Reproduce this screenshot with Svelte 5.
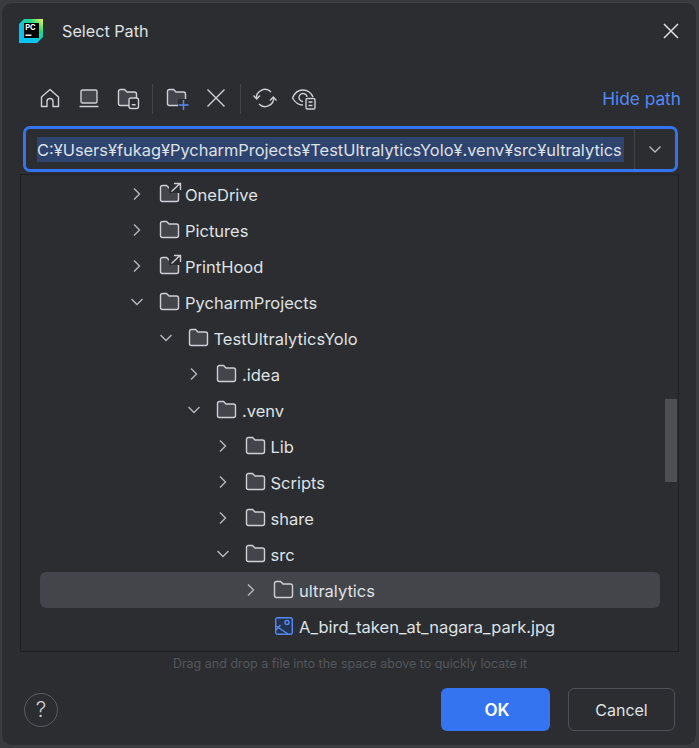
<script lang="ts">
	type Row = { name: string; depth: number; open?: boolean; leaf?: boolean; link?: boolean; selected?: boolean; image?: boolean };

	const rows: Row[] = [
		{ name: 'OneDrive', depth: 0, link: true },
		{ name: 'Pictures', depth: 0 },
		{ name: 'PrintHood', depth: 0, link: true },
		{ name: 'PycharmProjects', depth: 0, open: true },
		{ name: 'TestUltralyticsYolo', depth: 1, open: true },
		{ name: '.idea', depth: 2 },
		{ name: '.venv', depth: 2, open: true },
		{ name: 'Lib', depth: 3 },
		{ name: 'Scripts', depth: 3 },
		{ name: 'share', depth: 3 },
		{ name: 'src', depth: 3, open: true },
		{ name: 'ultralytics', depth: 4, selected: true },
		{ name: 'A_bird_taken_at_nagara_park.jpg', depth: 4, leaf: true, image: true }
	];

	let path = 'C:¥Users¥fukag¥PycharmProjects¥TestUltralyticsYolo¥.venv¥src¥ultralytics';
</script>

{#snippet folder()}
	<path d="M2.5 5.5 A2 2 0 0 1 4.5 3.5 H8.6 L11 6 H18.5 A2 2 0 0 1 20.5 8 V17.5 A2 2 0 0 1 18.5 19.5 H4.5 A2 2 0 0 1 2.5 17.5 Z" fill="#43454a" stroke="#ced0d6" stroke-width="1.4" stroke-linejoin="round" />
{/snippet}

<div class="dialog">
	<header class="titlebar">
		<svg class="logo" width="26" height="26" viewBox="0 0 26 26">
			<defs>
				<linearGradient id="pc" x1="0" y1="1" x2="1" y2="0">
					<stop offset="0.35" stop-color="#07c3f2" />
					<stop offset="0.7" stop-color="#21d789" />
					<stop offset="1" stop-color="#fcf84a" />
				</linearGradient>
			</defs>
			<path d="M6 1 H25 V19 L19 25 H1 V6 Z" fill="url(#pc)" />
			<rect x="6" y="5" width="15" height="15" fill="#000" />
			<text x="7.2" y="12" class="logo-text">PC</text>
			<rect x="7.5" y="16.5" width="6" height="1.4" fill="#fff" />
		</svg>
		<span class="title">Select Path</span>
		<svg class="close" width="18" height="18" viewBox="0 0 18 18">
			<path d="M2 2 L16 16 M16 2 L2 16" stroke="#dfe1e5" stroke-width="1.5" />
		</svg>
	</header>

	<div class="toolbar">
		<div class="tools">
			<svg class="tool" width="24" height="24" viewBox="0 0 24 24" fill="none" stroke="#ced0d6" stroke-width="1.4" stroke-linejoin="round">
				<path d="M3.5 11 L12 3.5 L20.5 11 V20.5 H15 V15.5 A3 3 0 0 0 9 15.5 V20.5 H3.5 Z" />
			</svg>
			<svg class="tool" width="24" height="24" viewBox="0 0 24 24" fill="none" stroke="#ced0d6" stroke-width="1.4">
				<rect x="4" y="4" width="16" height="13" rx="1.5" fill="#43454a" />
				<path d="M2.5 20.5 H21.5" />
			</svg>
			<svg class="tool" width="24" height="24" viewBox="0 0 24 24" fill="none">
				{@render folder()}
				<rect x="13" y="12" width="9.5" height="10.5" rx="2" fill="#2b2d30" stroke="#ced0d6" stroke-width="1.4" />
				<path d="M15.8 18.8 H19.6" stroke="#ced0d6" stroke-width="1.4" />
			</svg>
			<span class="sep first"></span>
			<svg class="tool" width="24" height="24" viewBox="0 0 24 24" fill="none">
				{@render folder()}
				<rect x="13" y="13" width="11" height="11" fill="#2b2d30" />
				<path d="M18.5 14 V24 M13.5 19 H23.5" stroke="#548af7" stroke-width="1.5" />
			</svg>
			<svg class="tool cross" width="24" height="24" viewBox="0 0 24 24" fill="none">
				<path d="M3.5 3.5 L20.5 20.5 M20.5 3.5 L3.5 20.5" stroke="#ced0d6" stroke-width="1.4" />
			</svg>
			<span class="sep second"></span>
			<svg class="tool refresh" width="24" height="24" viewBox="0 0 24 24" fill="none" stroke="#ced0d6" stroke-width="1.4">
				<path d="M3.5 13 A8.5 8.5 0 0 1 18 6" />
				<path d="M20.5 11 A8.5 8.5 0 0 1 6 18" />
				<path d="M0.5 9.5 L3.7 13 L7 9.5 M17 14.5 L20.3 11 L23.5 14.5" />
			</svg>
			<svg class="tool eye" width="26" height="24" viewBox="0 0 26 24" fill="none" stroke="#ced0d6" stroke-width="1.4">
				<path d="M12 19 C7 19 3.500 15.500 1.500 12 C3.500 7 7.500 4 12 4 C16.500 4 20.500 7 22 11" />
				<path d="M12 15.500 A4 4 0 1 1 16 11" />
				<rect x="15" y="12.500" width="9" height="10.500" rx="1.500" fill="#2b2d30" />
				<path d="M17.500 16 H21.500 M17.500 19.500 H21.500" />
			</svg>
		</div>
		<span class="hide">Hide path</span>
	</div>

	<div class="path">
		<span class="path-text"><span class="sel">{path}</span></span>
		<span class="drop">
			<svg width="14" height="14" viewBox="0 0 14 14" fill="none">
				<path d="M1.500 4.500 L7 10 L12.500 4.500" stroke="#b4b8bf" stroke-width="1.4" />
			</svg>
		</span>
	</div>

	<div class="tree">
		<div class="rows">
			{#each rows as row}
				<div class="row" class:selected={row.selected} style="padding-left: {109 + row.depth * 28.5}px">
					<span class="chev">
						{#if !row.leaf}
							<svg width="14" height="14" viewBox="0 0 14 14" fill="none">
								{#if row.open}
									<path d="M1.500 4 L7 9.500 L12.500 4" stroke="#b4b8bf" stroke-width="1.4" />
								{:else}
									<path d="M4 1.500 L9.500 7 L4 12.500" stroke="#b4b8bf" stroke-width="1.4" />
								{/if}
							</svg>
						{/if}
					</span>
					{#if row.image}
						<svg class="icon file" width="20" height="20" viewBox="0 0 20 20" fill="none" stroke="#548af7" stroke-width="1.4">
							<rect x="1.700" y="1.700" width="16.600" height="16.600" rx="2" fill="#25324d" />
							<circle cx="13" cy="6.500" r="2" />
							<path d="M2 10 L14 18 M2 14 L6.500 9" />
						</svg>
					{:else}
						<svg class="icon" width="24" height="24" viewBox="0 0 24 24" fill="none">
							{@render folder()}
							{#if row.link}
								<rect x="11" y="0" width="13" height="11" fill="#2b2d30" />
								<path d="M13.500 9.500 L22 1.500 M16 1.500 H22.500 V8" stroke="#ced0d6" stroke-width="1.400" />
							{/if}
						</svg>
					{/if}
					<span class="name">{row.name}</span>
				</div>
			{/each}
		</div>
		<div class="track"><div class="thumb"></div></div>
	</div>

	<p class="hint">Drag and drop a file into the space above to quickly locate it</p>

	<footer class="footer">
		<span class="help">?</span>
		<div class="buttons">
			<button class="btn ok">OK</button>
			<button class="btn cancel">Cancel</button>
		</div>
	</footer>
</div>

<style>
	:global(body) {
		background: #3a3b3e;
		font-family: Inter, "Noto Sans", sans-serif;
	}

	.dialog {
		box-sizing: border-box;
		width: 696px;
		height: 744px;
		margin: 2px 0 0 1px;
		background: #2b2d30;
		border: 1px solid #3c3e42;
		border-radius: 11px;
		color: #dfe1e5;
		overflow: hidden;
	}

	.titlebar {
		display: flex;
		align-items: center;
		height: 56px;
		padding: 0 16px 0 16px;
		box-sizing: border-box;
	}
	.logo { margin-right: 18px; }
	.logo-text { font-size: 7.500px; font-weight: 700; fill: #fff; font-family: Inter, sans-serif; }
	.title { font-size: 16.200px; flex: 1; color: #dfe1e5; }

	.toolbar {
		display: flex;
		align-items: center;
		justify-content: space-between;
		height: 36px;
		margin-top: 21px;
		padding: 0 15px 0 36px;
	}
	.tools { display: flex; align-items: center; }
	.tool { margin-right: 15px; flex: none; }
	.sep { width: 1px; height: 30px; background: #43454a; flex: none; }
	.sep.first { margin: 0 12px -2px -3px; }
	.sep.second { margin: 0 12px -2px -3px; }
	.cross { margin-right: 15px; }
	.refresh { margin-right: 14px; }
	.hide { color: #548af7; font-size: 17.300px; }

	.path {
		display: flex;
		align-items: stretch;
		box-sizing: border-box;
		height: 46px;
		margin: 10px 18px 0 21px;
		border: 3px solid #3574f0;
		border-radius: 7px;
	}
	.path-text {
		flex: 1;
		min-width: 0;
		display: flex;
		align-items: center;
		padding-left: 11px;
		font-size: 16.400px;
		white-space: nowrap;
		overflow: hidden;
	}
	.sel { background: #2e436e; line-height: 24px; color: #dfe1e5; padding: 1px 2px 0 0; }
	.drop {
		width: 40px;
		flex: none;
		border-left: 1px solid #43454a;
		display: flex;
		align-items: center;
		justify-content: center;
	}

	.tree {
		position: relative;
		box-sizing: border-box;
		height: 478px;
		margin: 2px 17px 0 18px;
		border: 1px solid #1e1f22;
		overflow: hidden;
	}
	.rows { padding-top: 1px; }
	.row {
		display: flex;
		align-items: center;
		height: 36px;
		margin: 0 18px 0 19px;
		border-radius: 6px;
		box-sizing: border-box;
		font-size: 16.500px;
	}
	.row.selected { background: #43454a; }
	.chev { width: 14px; height: 14px; margin-left: -19px; flex: none; display: flex; }
	.icon { margin-left: 14px; flex: none; }
	.icon.file { margin-left: 16px; margin-right: 2px; }
	.name { margin-left: 3px; padding-top: 2px; white-space: nowrap; color: #dfe1e5; }

	.track {
		position: absolute;
		top: 0;
		right: 0;
		width: 13px;
		height: 100%;
	}
	.thumb {
		position: absolute;
		top: 224px;
		left: 0;
		width: 12px;
		height: 83px;
		background: #4e5054;
	}

	.hint {
		margin: 3px 0 0;
		padding-left: 2px;
		text-align: center;
		font-size: 12.500px;
		line-height: 18px;
		color: #54575c;
	}

	.footer {
		display: flex;
		align-items: center;
		justify-content: space-between;
		margin-top: 15px;
		padding: 0 21px 0 22px;
	}
	.help {
		box-sizing: border-box;
		width: 34px;
		height: 34px;
		border: 1px solid #5a5d63;
		border-radius: 50%;
		display: flex;
		align-items: center;
		justify-content: center;
		font-size: 21px;
		font-weight: 300;
		color: #ced0d6;
	}
	.buttons { display: flex; gap: 18px; }
	.btn {
		box-sizing: border-box;
		height: 43px;
		border-radius: 6px;
		font-family: inherit;
		font-size: 16px;
		color: #dfe1e5;
		padding: 0;
	}
	.ok { width: 109px; background: #3574f0; border: none; color: #fff; font-weight: 600; font-size: 17px; padding-left: 3px; }
	.cancel { width: 107px; background: transparent; border: 1.500px solid #4e5157; }
</style>
